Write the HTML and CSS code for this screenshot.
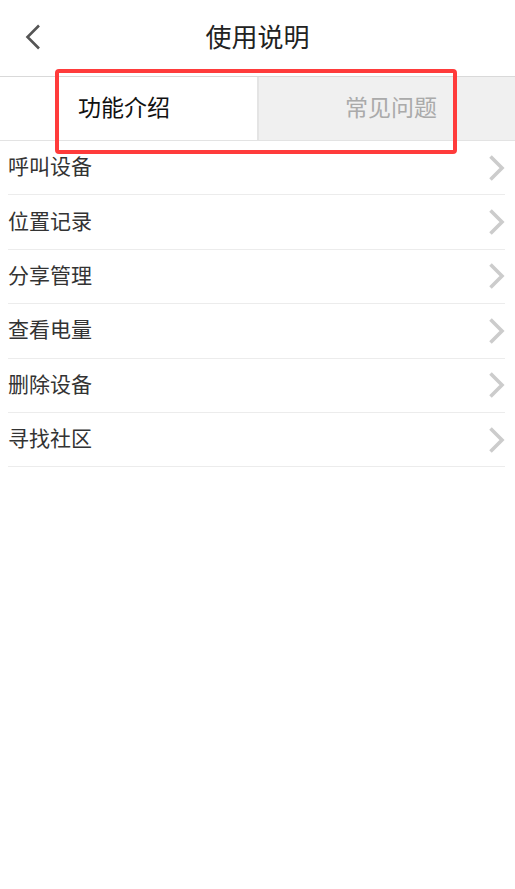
FILE: index.html
```html
<!DOCTYPE html>
<html lang="zh-CN">
<head>
    <meta charset="UTF-8">
    <meta name="viewport" content="width=device-width, initial-scale=1.0">
    <title>使用说明</title>
    <link rel="stylesheet" href="styles.css">
</head>
<body>

<div class="header">
    <a href="#" class="back">
        <svg width="18" height="26" viewBox="0 0 18 26">
            <path d="M15 1.5 L3.5 13 L15 24.5" fill="none" stroke="#555" stroke-width="2.6"/>
        </svg>
    </a>
    <h1>使用说明</h1>
</div>

<div class="tabs">
    <div class="tab active">功能介绍</div>
    <div class="tab other">常见问题</div>
    <div class="highlight"></div>
</div>

<ul class="list">
    <li><span>呼叫设备</span> <svg class="arrow" width="17" height="26" viewBox="0 0 17 26"><path d="M2.5 1.5 L14 13 L2.5 24.5" fill="none" stroke="#ccc" stroke-width="3.6"/></svg></li>
    <li><span>位置记录</span> <svg class="arrow" width="17" height="26" viewBox="0 0 17 26"><path d="M2.5 1.5 L14 13 L2.5 24.5" fill="none" stroke="#ccc" stroke-width="3.6"/></svg></li>
    <li><span>分享管理</span> <svg class="arrow" width="17" height="26" viewBox="0 0 17 26"><path d="M2.5 1.5 L14 13 L2.5 24.5" fill="none" stroke="#ccc" stroke-width="3.6"/></svg></li>
    <li><span>查看电量</span> <svg class="arrow" width="17" height="26" viewBox="0 0 17 26"><path d="M2.5 1.5 L14 13 L2.5 24.5" fill="none" stroke="#ccc" stroke-width="3.6"/></svg></li>
    <li><span>删除设备</span> <svg class="arrow" width="17" height="26" viewBox="0 0 17 26"><path d="M2.5 1.5 L14 13 L2.5 24.5" fill="none" stroke="#ccc" stroke-width="3.6"/></svg></li>
    <li><span>寻找社区</span> <svg class="arrow" width="17" height="26" viewBox="0 0 17 26"><path d="M2.5 1.5 L14 13 L2.5 24.5" fill="none" stroke="#ccc" stroke-width="3.6"/></svg></li>
</ul>

</body>
</html>
```

FILE: styles.css
```css
body {
    font-family: "Noto Sans CJK SC", "Noto Sans", sans-serif;
    background: #fff;
    margin: 0;
    color: #333;
}
.header {
    height: 70px;
    padding-bottom: 6px;
    display: flex;
    align-items: center;
    justify-content: center;
    position: relative;
    border-bottom: 1px solid #d9d9d9;
}
.header h1 {
    margin: 0;
    font-size: 26px;
    font-weight: 400;
    color: #222;
}
.back {
    position: absolute;
    left: 24px;
    top: 24px;
    display: block;
    line-height: 0;
}
.tabs {
    display: flex;
    height: 63px;
    border-bottom: 1px solid #e3e3e3;
    position: relative;
}
.tab {
    flex: 1;
    display: flex;
    align-items: center;
    font-size: 23px;
    padding: 0 78px 6px;
}
.tab.active {
    background: #fff;
    color: #111;
    border-right: 2px solid #e4e4e4;
}
.tab.other {
    background: #f0f0f0;
    color: #aaa;
    justify-content: flex-end;
}
.highlight {
    position: absolute;
    left: 55px;
    top: -8px;
    width: 394px;
    height: 77px;
    border: 4px solid #ff3b3b;
    border-radius: 4px;
}
.list {
    list-style: none;
    margin: 0;
    padding: 0 10px 0 8px;
}
.list li {
    height: 53.4px;
    border-bottom: 1px solid #ececec;
    display: flex;
    align-items: center;
    justify-content: space-between;
    font-size: 21px;
    color: #333;
}
.list li span {
    margin-top: -5px;
}
.arrow {
    display: block;
}
```
